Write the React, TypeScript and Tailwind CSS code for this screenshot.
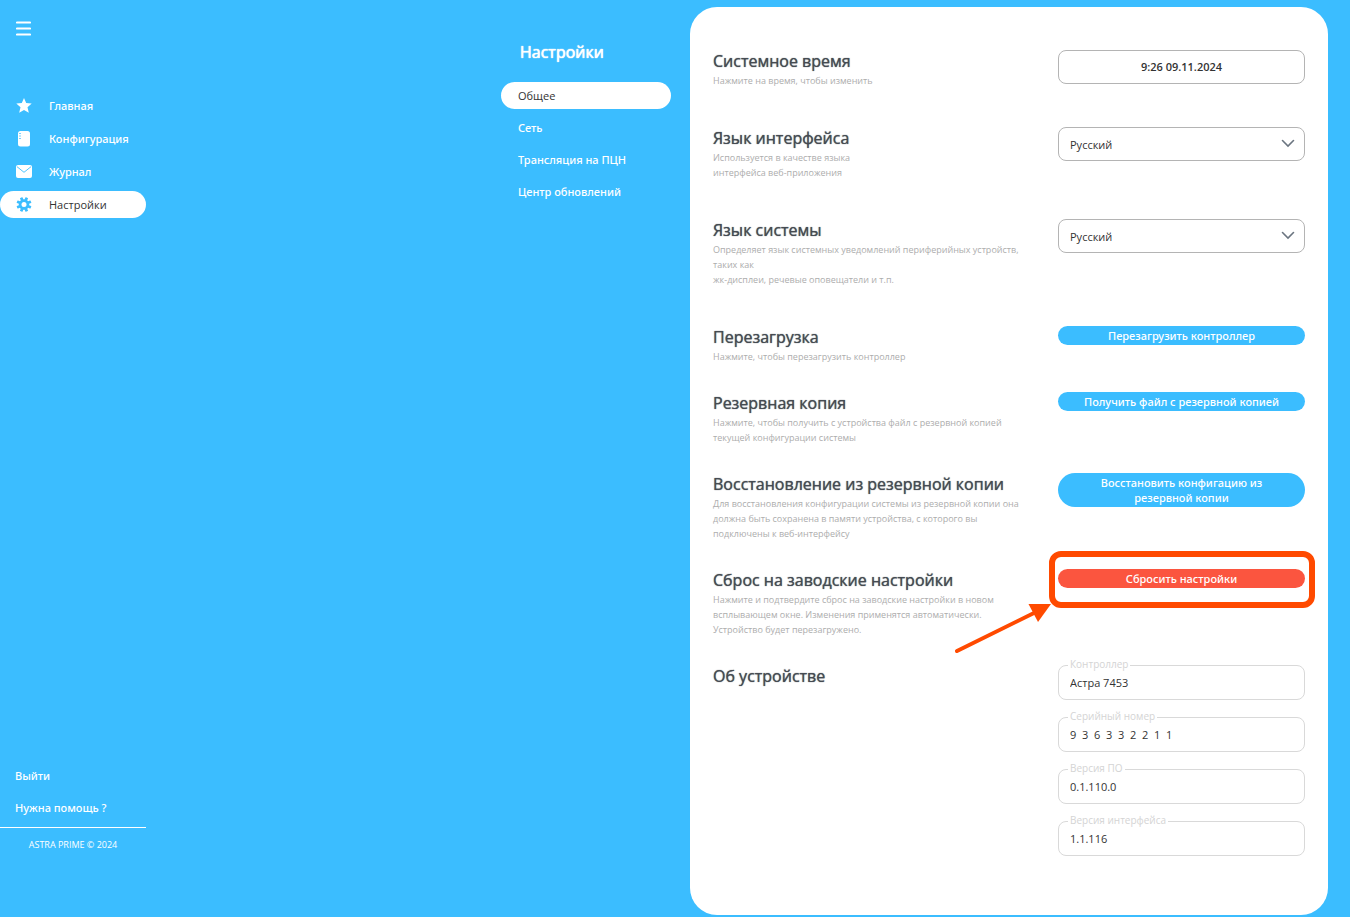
import { useState } from 'react'
import type { ReactNode } from 'react'

const NAV_ITEMS = [
  { id: 'home', label: 'Главная', icon: <StarIcon /> },
  { id: 'config', label: 'Конфигурация', icon: <ConfigIcon /> },
  { id: 'journal', label: 'Журнал', icon: <MailIcon /> },
  { id: 'settings', label: 'Настройки', icon: <GearIcon /> },
]

const SECTIONS = ['Общее', 'Сеть', 'Трансляция на ПЦН', 'Центр обновлений']

const DEVICE_INFO = [
  { id: 'controller', label: 'Контроллер', value: 'Астра 7453' },
  { id: 'serial', label: 'Серийный номер', value: '9  3  6  3  3  2  2  1  1' },
  { id: 'firmware', label: 'Версия ПО', value: '0.1.110.0' },
  { id: 'ui-version', label: 'Версия интерфейса', value: '1.1.116' },
]

function StarIcon() {
  return (
    <svg className="h-4 w-4" viewBox="0 0 16 16" fill="currentColor">
      <path d="M8 0l2.2 5.1 5.5.5-4.2 3.7 1.3 5.5L8 11.900l-4.800 2.900 1.300-5.500L.3 5.600l5.500-.5z" />
    </svg>
  )
}

function ConfigIcon() {
  return (
    <svg className="h-4 w-4" viewBox="0 0 16 16">
      <rect x="2" y="0" width="12" height="15.5" rx="2.5" fill="currentColor" />
      <path d="M3 2.500h2M3 5h2M3 7.500h2" stroke="#3bbdff" strokeWidth="0.7" />
    </svg>
  )
}

function MailIcon() {
  return (
    <svg className="h-4 w-4" viewBox="0 0 16 16">
      <rect x="0" y="1" width="16" height="13" rx="2" fill="currentColor" />
      <path d="M1 2.700l7 5.600 7-5.600" fill="none" stroke="#3bbdff" strokeWidth="0.9" />
    </svg>
  )
}

function GearIcon() {
  return (
    <svg className="h-4 w-4" viewBox="0 0 16 16">
      <g fill="currentColor">
        <circle cx="8" cy="7.5" r="5.2" />
        <rect x="6.600" y="0" width="2.800" height="15" rx="0.5" transform="rotate(22.500 8 7.500)" />
        <rect x="6.600" y="0" width="2.800" height="15" rx="0.5" transform="rotate(67.500 8 7.500)" />
        <rect x="6.600" y="0" width="2.800" height="15" rx="0.5" transform="rotate(112.500 8 7.500)" />
        <rect x="6.600" y="0" width="2.800" height="15" rx="0.5" transform="rotate(157.500 8 7.500)" />
      </g>
      <circle cx="8" cy="7.5" r="2.5" fill="#fff" />
    </svg>
  )
}

type RowProps = {
  title: string
  hint?: string
  spacious?: boolean
  children: ReactNode
}

function SettingRow({ title, hint, spacious, children }: RowProps) {
  return (
    <section className={`grid grid-cols-[1fr_247px] items-start ${spacious ? 'pb-[39px]' : 'pb-[28px]'}`}>
      <div>
        <h2 className="mb-px text-[16px] leading-[22px] text-[#454b52] [text-shadow:0_0_1px_#454b52]">{title}</h2>
        {hint && <p className="text-[9px] leading-[15px] whitespace-pre-line text-[#adadad]">{hint}</p>}
      </div>
      {children}
    </section>
  )
}

type LanguageSelectProps = {
  label: string
  value: string
  onChange: (value: string) => void
}

function LanguageSelect({ label, value, onChange }: LanguageSelectProps) {
  return (
    <div className="relative">
      <select
        aria-label={label}
        value={value}
        onChange={(e) => onChange(e.target.value)}
        className="h-[34px] w-full appearance-none rounded-lg border border-[#b4b4b4] bg-white px-[11px] pt-0.5 text-[11px] text-[#333]"
      >
        <option value="ru">Русский</option>
        <option value="en">English</option>
      </select>
      <svg className="pointer-events-none absolute top-[10px] right-[10px] h-3 w-3.5" viewBox="0 0 14 12" fill="none">
        <path d="M1.500 3.500L7 9l5.500-5.500" stroke="#6b7580" strokeWidth="1.6" strokeLinecap="round" />
      </svg>
    </div>
  )
}

function ActionButton({ children }: { children: ReactNode }) {
  return (
    <button
      type="button"
      className="w-full rounded-full bg-[#3bbdff] px-5 py-0.5 font-['Noto_Sans',sans-serif] leading-[15px] font-medium text-white"
    >
      {children}
    </button>
  )
}

export default function App() {
  const [section, setSection] = useState('Общее')
  const [uiLanguage, setUiLanguage] = useState('ru')
  const [systemLanguage, setSystemLanguage] = useState('ru')

  return (
    <div className="grid min-h-screen grid-cols-[690fr_638fr] bg-[#3bbdff] pr-[22px] font-['Open_Sans','Noto_Sans',sans-serif] text-[11px]">
      <div className="flex justify-between pr-[19px]">
        {/* Sidebar */}
        <aside className="flex w-[146px] flex-col text-white">
          <button type="button" aria-label="Меню" className="mt-5 ml-4 flex h-4 w-[15px] items-center">
            <svg className="h-4 w-[15px]" viewBox="0 0 15 16" stroke="currentColor" strokeWidth="2.2" strokeLinecap="round">
              <path d="M1 2.500h13M1 8.500h13M1 14.500h13" />
            </svg>
          </button>
          <nav className="mt-[56px] flex flex-col gap-1.5">
            {NAV_ITEMS.map((item) => (
              <a
                key={item.id}
                href={`#${item.id}`}
                className={`flex h-[27px] items-center gap-[17px] pl-4 ${
                  item.id === 'settings'
                    ? 'rounded-full bg-white text-[#3bbdff]'
                    : "font-['Noto_Sans',sans-serif] font-medium"
                }`}
              >
                {item.icon}
                <span className={item.id === 'settings' ? 'pt-0.5 text-[#333]' : 'pt-0.5'}>{item.label}</span>
              </a>
            ))}
          </nav>
          <div className="mt-auto flex flex-col gap-4 border-b border-white pb-[11px] pl-[15px] font-['Noto_Sans',sans-serif] leading-4 font-medium">
            <a href="#logout">Выйти</a>
            <a href="#help">Нужна помощь ?</a>
          </div>
          <p className="mt-[9px] mb-16 text-center text-[9px] leading-4">ASTRA PRIME © 2024</p>
        </aside>

        {/* Settings sections */}
        <div className="w-[170px] pt-10 text-white">
          <h1 className="pl-[19px] text-[16px] leading-6 [text-shadow:0_0_1px_#fff,0_0_1px_#fff]">Настройки</h1>
          <nav className="mt-[18px] flex flex-col gap-[5px]">
            {SECTIONS.map((name) => (
              <button
                key={name}
                type="button"
                onClick={() => setSection(name)}
                className={`h-[27px] rounded-full pt-0.5 pl-[17px] text-left ${
                  name === section ? 'bg-white text-[#333]' : "font-['Noto_Sans',sans-serif] font-medium"
                }`}
              >
                {name}
              </button>
            ))}
          </nav>
        </div>
      </div>

      {/* Settings panel */}
      <main className="mt-[7px] mb-0.5 rounded-[27px] bg-white px-[23px] pt-[43px] pb-5">
        <SettingRow title="Системное время" hint="Нажмите на время, чтобы изменить" spacious>
          <button type="button" className="h-[34px] w-full rounded-lg border border-[#b4b4b4] font-semibold text-[#333]">
            9:26 09.11.2024
          </button>
        </SettingRow>

        <SettingRow
          title="Язык интерфейса"
          hint={'Используется в качестве языка\nинтерфейса веб-приложения'}
          spacious
        >
          <LanguageSelect label="Язык интерфейса" value={uiLanguage} onChange={setUiLanguage} />
        </SettingRow>

        <SettingRow
          title="Язык системы"
          hint={'Определяет язык системных уведомлений периферийных устройств,\nтаких как\nжк-дисплеи, речевые оповещатели и т.п.'}
          spacious
        >
          <LanguageSelect label="Язык системы" value={systemLanguage} onChange={setSystemLanguage} />
        </SettingRow>

        <SettingRow title="Перезагрузка" hint="Нажмите, чтобы перезагрузить контроллер">
          <ActionButton>Перезагрузить контроллер</ActionButton>
        </SettingRow>

        <SettingRow
          title="Резервная копия"
          hint={'Нажмите, чтобы получить с устройства файл с резервной копией\nтекущей конфигурации системы'}
        >
          <ActionButton>Получить файл с резервной копией</ActionButton>
        </SettingRow>

        <SettingRow
          title="Восстановление из резервной копии"
          hint={'Для восстановления конфигурации системы из резервной копии она\nдолжна быть сохранена в памяти устройства, с которого вы\nподключены к веб-интерфейсу'}
        >
          <ActionButton>
            Восстановить конфигацию из
            <br />
            резервной копии
          </ActionButton>
        </SettingRow>

        <SettingRow
          title="Сброс на заводские настройки"
          hint={'Нажмите и подтвердите сброс на заводские настройки в новом\nвсплывающем окне. Изменения применятся автоматически.\nУстройство будет перезагружено.'}
        >
          <div className="relative">
            <button
              type="button"
              className="block w-full rounded-full bg-[#fb553f] py-0.5 font-['Noto_Sans',sans-serif] leading-[15px] font-medium text-white"
            >
              Сбросить настройки
            </button>
            {/* Callout around the reset button */}
            <div className="pointer-events-none absolute -top-[18px] -right-[10px] -left-[9px] h-[57px] rounded-xl border-6 border-[#ff4a00]" />
            <svg className="pointer-events-none absolute top-[32px] -left-[104px] h-[54px] w-[98px]" viewBox="0 0 98 54">
              <path d="M3 50L82 11" stroke="#ff4a00" strokeWidth="4" strokeLinecap="round" />
              <path d="M97 3L74.500 3L84 21z" fill="#ff4a00" />
            </svg>
          </div>
        </SettingRow>

        <SettingRow title="Об устройстве">
          <div className="flex flex-col gap-[17px]">
            {DEVICE_INFO.map((field) => (
              <div key={field.id} className="relative">
                <label
                  htmlFor={field.id}
                  className="absolute -top-[7px] left-[10px] bg-white px-0.5 text-[10px] leading-3 text-[#d4d4d4]"
                >
                  {field.label}
                </label>
                <input
                  id={field.id}
                  readOnly
                  value={field.value}
                  className="block h-[35px] w-full rounded-lg border border-[#d9d9d9] px-[11px] text-[#333]"
                />
              </div>
            ))}
          </div>
        </SettingRow>
      </main>
    </div>
  )
}
